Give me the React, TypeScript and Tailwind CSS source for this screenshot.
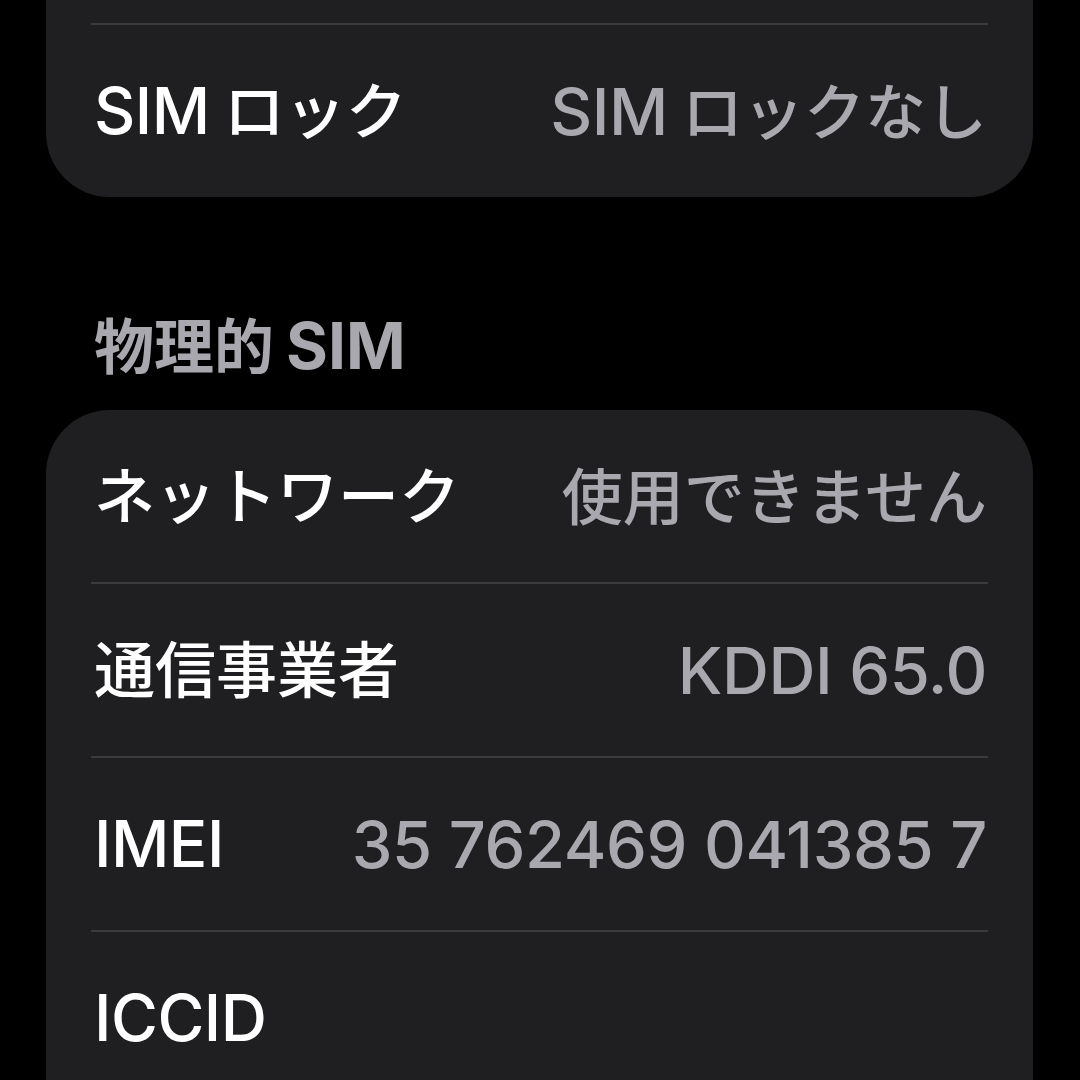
const font = {
  fontFamily: 'Inter, "Noto Sans CJK JP", "Noto Sans", sans-serif',
};

// split mixed text so kana/kanji can be set a little smaller than latin,
// the way the iOS system font pairs SF with Hiragino
function Mixed({ text, cjk, gap }: { text: string; cjk: string; gap: string }) {
  const parts = text.match(/[\u3000-\u9fff\uff00-\uffef]+|[^\u3000-\u9fff\uff00-\uffef]+/g) ?? [];
  return (
    <>
      {parts.map((p, i) => {
        const isCjk = /[\u3000-\u9fff]/.test(p);
        return (
          <span
            key={i}
            className={isCjk ? cjk : undefined}
            style={isCjk && i > 0 ? { marginLeft: gap } : undefined}
          >
            {p}
          </span>
        );
      })}
    </>
  );
}

function Divider() {
  return <div className="mx-[45px] h-[2px] bg-[#3b3b3e]" />;
}

function Row({ label, value }: { label: string; value?: string }) {
  return (
    <div className="flex h-[172px] items-center justify-between pl-[48px] pr-[46px]">
      <span className="text-[64px] font-medium leading-none tracking-[-0.5px] text-white">
        <Mixed text={label} cjk="text-[61px] tracking-normal" gap="14px" />
      </span>
      {value && (
        <span className="text-[65px] font-medium leading-none tracking-[-0.4px] text-[#a8a8ae]">
          <Mixed text={value} cjk="text-[61px] tracking-normal" gap="14px" />
        </span>
      )}
    </div>
  );
}

export default function App() {
  return (
    <div
      className="h-[1080px] w-[1080px] overflow-hidden bg-black pl-[46px] pr-[47px]"
      style={font}
    >
      <div className="rounded-b-[64px] bg-[#1f1f21]">
        <div className="h-[23px]" />
        <Divider />
        <Row label="SIMロック" value="SIMロックなし" />
      </div>

      <div className="h-[213px] pl-[48px] pt-[117px]">
        <span className="text-[60px] font-bold leading-none text-[#a8a8ae]">
          物理的<span className="ml-[12px] text-[64px]">SIM</span>
        </span>
      </div>

      <div className="rounded-t-[64px] bg-[#1f1f21]">
        <Row label="ネットワーク" value="使用できません" />
        <Divider />
        <Row label="通信事業者" value="KDDI 65.0" />
        <Divider />
        <Row label="IMEI" value="35 762469 041385 7" />
        <Divider />
        <Row label="ICCID" />
        <div className="h-[80px]" />
      </div>
    </div>
  );
}
